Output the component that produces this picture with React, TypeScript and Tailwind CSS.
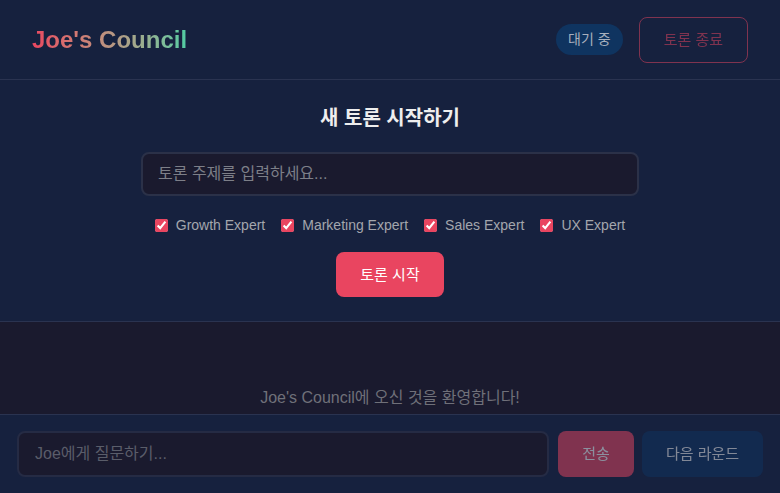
import React, { useState } from "react";

const experts = ["Growth Expert", "Marketing Expert", "Sales Expert", "UX Expert"];

const App: React.FC = () => {
  const [topic, setTopic] = useState("");
  const [question, setQuestion] = useState("");
  const [selected, setSelected] = useState<string[]>(experts);

  const toggle = (name: string) => {
    setSelected((prev) =>
      prev.includes(name) ? prev.filter((n) => n !== name) : [...prev, name]
    );
  };

  return (
    <div className="h-[493px] w-full flex flex-col bg-[#1a1a2e] text-[#eeeeee] font-['Liberation_Sans','Noto_Sans_CJK_KR',sans-serif] overflow-hidden">
      {/* Header */}
      <header className="h-[80px] shrink-0 flex items-center justify-between px-8 bg-[#16213e] border-b border-[#2a3350]">
        <h1 className="text-2xl font-bold bg-gradient-to-r from-[#e94560] to-[#4ecca3] bg-clip-text text-transparent">
          Joe's Council
        </h1>
        <div className="flex items-center gap-4">
          <span className="px-3 py-1 rounded-full bg-[#0f3460] text-sm text-[#a8b0bd] leading-[23px]">
            대기 중
          </span>
          <button
            disabled
            className="px-6 py-3 rounded-lg border border-[#e94560] text-[#e94560] text-[15px] leading-5 opacity-50"
          >
            토론 종료
          </button>
        </div>
      </header>

      {/* Setup */}
      <section className="flex flex-col items-center px-8 pt-6 pb-6 bg-[#16213e] border-b border-[#2a3350]">
        <h2 className="text-xl font-bold leading-7 text-[#eeeeee]">새 토론 시작하기</h2>
        <input
          value={topic}
          onChange={(e) => setTopic(e.target.value)}
          placeholder="토론 주제를 입력하세요..."
          className="mt-5 w-[498px] h-[44px] px-[15px] rounded-lg bg-[#1a1a2e] border-2 border-[#2b3148] text-base text-[#eeeeee] placeholder-[#7d7f88] outline-none"
        />
        <div className="mt-[19px] flex items-center gap-4">
          {experts.map((name) => (
            <label key={name} className="flex items-center gap-2 text-sm text-[#a3a6ad] cursor-pointer">
              <input
                type="checkbox"
                checked={selected.includes(name)}
                onChange={() => toggle(name)}
                className="w-[13px] h-[13px] accent-[#e94560]"
              />
              {name}
            </label>
          ))}
        </div>
        <button className="mt-[17px] px-6 py-3 rounded-lg bg-[#e94560] text-white text-[15px] leading-[21px] font-normal">
          토론 시작
        </button>
      </section>

      {/* Chat */}
      <main className="flex-1 flex flex-col justify-end items-center pb-[4px] bg-[#1a1a2e]">
        <p className="text-base text-[#6f7079]">Joe's Council에 오신 것을 환영합니다!</p>
      </main>

      {/* Input bar */}
      <footer className="flex items-stretch gap-2 px-[17px] py-4 bg-[#16213e] border-t border-[#2a3350]">
        <input
          value={question}
          onChange={(e) => setQuestion(e.target.value)}
          placeholder="Joe에게 질문하기..."
          className="flex-1 h-[46px] px-4 rounded-lg bg-[#1a1a2e] border-2 border-[#252b44] text-base text-[#eeeeee] placeholder-[#5a5d6a] outline-none"
        />
        <button disabled className="ml-px w-[76px] rounded-lg bg-[#e94560] text-white text-[15px] opacity-50">
          전송
        </button>
        <button disabled className="w-[121px] rounded-lg bg-[#0f3460] text-[#eeeeee] text-[15px] opacity-50">
          다음 라운드
        </button>
      </footer>
    </div>
  );
};

export default App;
